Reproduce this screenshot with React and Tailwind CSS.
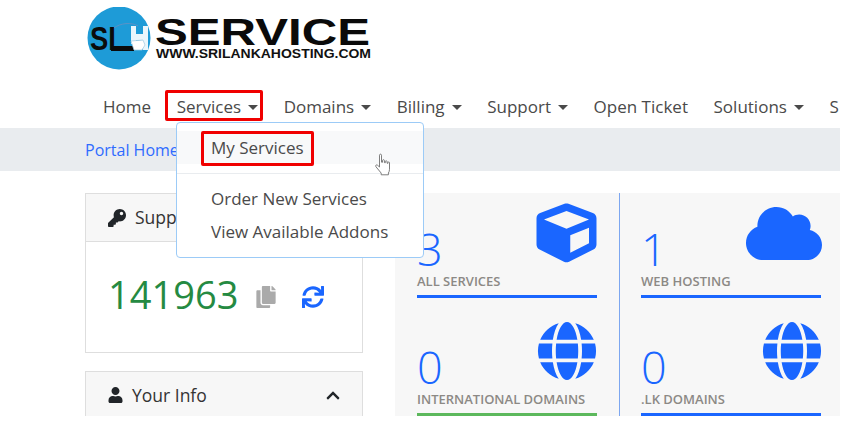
import React from 'react'
import { FaChevronUp, FaCloud, FaCopy, FaCube, FaGlobe, FaKey, FaSync, FaUser } from 'react-icons/fa'

const navItems = [
  { label: 'Home' },
  { label: 'Services', caret: true, active: true },
  { label: 'Domains', caret: true },
  { label: 'Billing', caret: true },
  { label: 'Support', caret: true },
  { label: 'Open Ticket' },
  { label: 'Solutions', caret: true },
  { label: 'S' },
]

const Logo = () => (
  <svg width="290" height="66" viewBox="0 0 290 66" className="block">
    <circle cx="32" cy="31" r="31.5" fill="#1e9bd7" />
    <text x="3" y="43" fontFamily="Liberation Sans" fontWeight="700" fontSize="33" textLength="35" lengthAdjust="spacingAndGlyphs" fill="#0b0b0b">SL</text>
    <rect x="24" y="39" width="23" height="5" fill="#0b0b0b" />
    <path d="M44 19h5v8h7v-8h5v24h-5V33h-7v4h-5z" fill="#eaf6fc" />
    <path d="M44 34l12-1 2 5-3 5h-8z" fill="#fff" stroke="#9cc7e0" strokeWidth="0.7" />
    <path d="M27 21c6-5 18-6 24-2" fill="none" stroke="#6d8fc0" strokeWidth="0.8" />
    <text x="68" y="38" fontFamily="Liberation Sans" fontWeight="700" fontSize="37" textLength="215" lengthAdjust="spacingAndGlyphs" fill="#0a0a0a">SERVICE</text>
    <text x="69" y="51" fontFamily="Liberation Sans" fontWeight="700" fontSize="13.5" textLength="215" lengthAdjust="spacingAndGlyphs" fill="#111">WWW.SRILANKAHOSTING.COM</text>
  </svg>
)

const HandCursor = () => (
  <svg width="18" height="23" viewBox="0 0 17 23" className="absolute left-[197px] top-[30px]">
    <path d="M5 2.2c0-1.4 2-1.4 2 0v7l1 .1V7.6c0-1.2 1.9-1.2 1.9 0v2l.9.2V8.6c0-1.1 1.8-1.1 1.8 0v1.6l.8.2v-.7c0-1 1.6-1 1.6 0v6.6c0 1.7-.5 2.7-1.1 3.7v1.8H6.7v-1.7L1.4 13.7c-.9-1.1.5-2.4 1.6-1.5L5 14z" fill="#fff" stroke="#6f6f6f" strokeWidth="0.9" strokeLinejoin="round" />
  </svg>
)

const Stat = ({ value, label, icon: Icon, iconClass, barClass, first, padClass }) => (
  <div className={`flex flex-col ${padClass} ${first ? 'h-[105px]' : 'h-[118px]'}`}>
    <div className="flex flex-1 items-end justify-between">
      <span className="mb-[-2px] text-[45px] leading-[40px] font-light text-[#1a66ff]">{value}</span>
      <Icon className={`${iconClass} text-[#1a66ff]`} />
    </div>
    <p className="mt-[4px] text-[13px] leading-[20px] font-semibold whitespace-nowrap text-[#8c8985] uppercase">{label}</p>
    <div className={`mt-[4px] h-[3px] ${barClass}`} />
  </div>
)

export default function App() {
  return (
    <div className="relative h-[416px] w-[840px] overflow-hidden bg-white font-['Open_Sans',sans-serif] text-[#212529]">
      <header className="h-[91px] pt-[7px] pl-[87px]">
        <Logo />
      </header>

      <nav className="flex h-[32px] items-center gap-[25.6px] pl-[103px] text-[17px] font-medium whitespace-nowrap text-[#4a4a4a]">
        {navItems.map((item) => (
          <span key={item.label} className="relative flex items-center">
            {item.active && <span className="absolute -top-[4px] -right-[5px] -left-[12px] h-[31px] rounded-[2px] border-[3px] border-[#f00000]" />}
            {item.label}
            {item.caret && <span className="ml-[7px] h-0 w-0 border-x-[5px] border-t-[5px] border-x-transparent border-t-[#4a4a4a]" />}
          </span>
        ))}
      </nav>

      <div className="mt-[5px] flex h-[43px] items-center bg-[#e9ecef] pl-[85px] text-base text-[#2f6bff]">
        Portal Home
      </div>

      <main className="mt-[22px] flex gap-[32px] pl-[85px]">
        <aside className="flex w-[278px] shrink-0 flex-col gap-[18px]">
          <section className="h-[160px] border border-[#dedede]">
            <div className="flex h-[48px] items-center gap-[9px] border-b border-[#dedede] bg-[#f7f7f7] pl-[22px] text-[17.5px] text-[#333]">
              <FaKey className="h-[18px] w-[18px] text-[#212529]" />
              <span>Support Pin</span>
            </div>
            <div className="flex items-center pt-[27px] pl-[22px]">
              <span className="text-[38px] leading-[50px] text-[#258a42]">141963</span>
              <FaCopy className="mt-[5px] ml-[18px] h-[22px] w-[20px] text-[#aaaaaa]" />
              <FaSync className="mt-[5px] ml-[26px] h-[22px] w-[22px] text-[#1a66ff]" />
            </div>
          </section>
          <section className="h-[60px] border border-[#dedede] bg-[#f7f7f7]">
            <div className="flex h-[46px] items-center justify-between pr-[21px] pl-[22px] text-[17.5px] text-[#333]">
              <span className="flex items-center gap-[9px]">
                <FaUser className="h-[16px] w-[15px] text-[#212529]" />
                Your Info
              </span>
              <FaChevronUp className="h-[15px] w-[16px] text-[#212529]" />
            </div>
          </section>
        </aside>

        <section className="grid h-[223px] flex-1 grid-cols-[225px_1fr] content-start bg-[#f7f7f7]">
          <div className="border-r border-[#7da7f0]">
            <Stat first padClass="px-[22px]" value="3" label="All Services" icon={FaCube} iconClass="mb-[4px] h-[60px] w-[61px]" barClass="bg-[#1a66ff]" />
            <Stat padClass="px-[22px]" value="0" label="International Domains" icon={FaGlobe} iconClass="mb-[4px] h-[60px] w-[60px]" barClass="bg-[#5cb85c]" />
          </div>
          <div>
            <Stat first padClass="pr-[19px] pl-[21px]" value="1" label="Web Hosting" icon={FaCloud} iconClass="mr-[-1px] mb-[3px] h-[61px] w-[76px]" barClass="bg-[#1a66ff]" />
            <Stat padClass="pr-[19px] pl-[21px]" value="0" label=".LK Domains" icon={FaGlobe} iconClass="mr-[-1px] mb-[4px] h-[60px] w-[60px]" barClass="bg-[#1a66ff]" />
          </div>
        </section>
      </main>

      {/* open Services menu */}
      <div className="absolute top-[122px] left-[176px] h-[136px] w-[248px] rounded-[4px] border border-[#9ccbf7] bg-white text-[17px] font-medium text-[#4a4a4a]">
        <div className="mt-[8px] flex h-[33px] items-center bg-[#f8f9fa] pl-[34px]">My Services</div>
        <div className="mt-[9px] border-t border-[#e9ecef]" />
        <div className="mt-[8px] flex h-[33px] items-center pl-[34px]">Order New Services</div>
        <div className="flex h-[33px] items-center pl-[34px]">View Available Addons</div>
        <span className="absolute top-[8px] left-[24px] h-[35px] w-[113px] rounded-[2px] border-[3px] border-[#f00000]" />
        <HandCursor />
      </div>
    </div>
  )
}
